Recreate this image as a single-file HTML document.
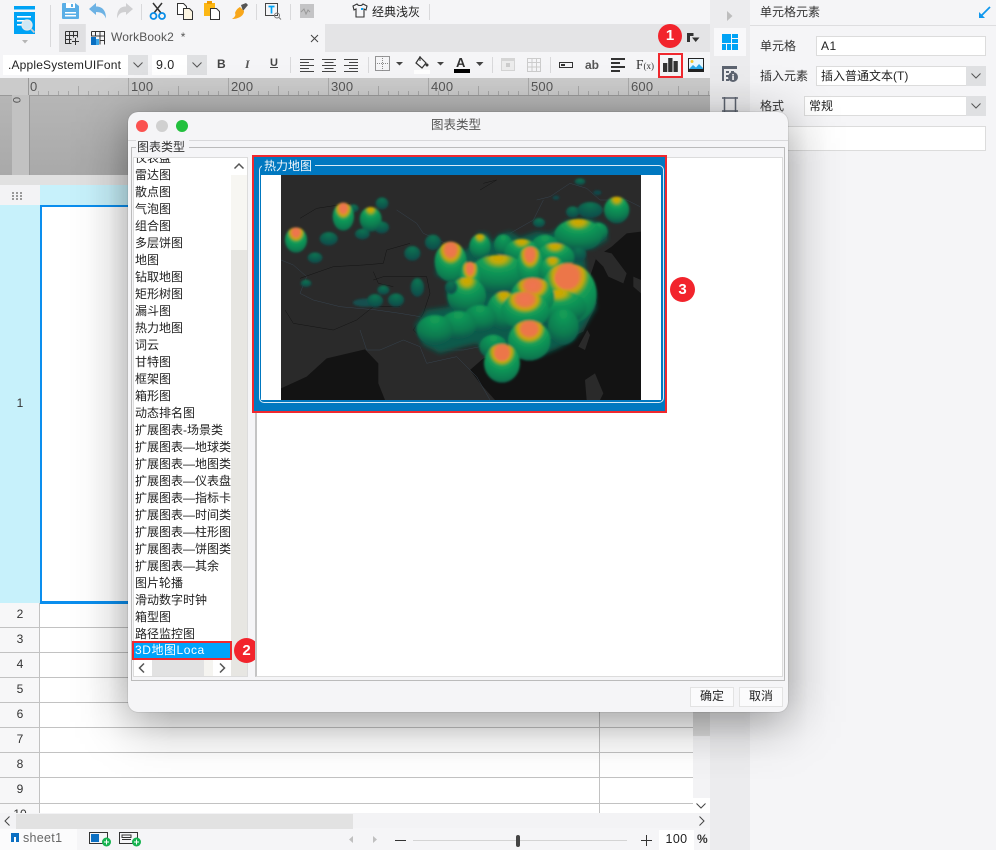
<!DOCTYPE html>
<html lang="zh"><head><meta charset="utf-8"><title>图表类型</title>
<style>
html,body{margin:0;padding:0;width:996px;height:850px;overflow:hidden;background:#f5f5f7}
body{position:relative;font:12px/17px "Liberation Sans","Noto Sans CJK SC",sans-serif;color:#333}
.a{position:absolute;box-sizing:border-box}
.t{position:absolute;white-space:nowrap}
svg{position:absolute;overflow:visible}
.sep{position:absolute;width:1px;background:#d9d9db}
.rn{position:absolute;top:79px;font-size:13px;line-height:15px;color:#555;letter-spacing:.2px}
.rowl{position:absolute;left:0;width:693px;height:1px;background:#c2c2c2}
.rh{position:absolute;left:0;width:40px;text-align:center;font-size:12px;color:#333}
.list div{height:17px;line-height:17px;padding-left:1px;white-space:nowrap;color:#222}
.inp{position:absolute;box-sizing:border-box;background:#fff;border:1px solid #dcdcdc;font-size:12px;line-height:18px;padding-left:4px;color:#222}
.dd{position:absolute;box-sizing:border-box;background:#dfe0e2}
.badge{position:absolute;width:24px;height:24px;border-radius:50%;background:#f2242c;color:#fff;font:bold 15px/24px "Liberation Sans",sans-serif;text-align:center}
.red{position:absolute;box-sizing:border-box;border:2px solid #f0282e}
.btn{position:absolute;box-sizing:border-box;background:#fbfbfc;border:1px solid #e3e3e3;text-align:center;line-height:17px;color:#222}
.shadow{position:absolute;left:68px;top:62px;width:780px;height:720px;
background:linear-gradient(90deg,rgba(0,0,0,0) 0,rgba(0,0,0,.015) 20px,rgba(0,0,0,.076) 40px,rgba(0,0,0,.21) 60px,rgba(0,0,0,.35) 82px,rgba(0,0,0,.42) 104px,rgba(0,0,0,.42) 676px,rgba(0,0,0,.35) 698px,rgba(0,0,0,.21) 720px,rgba(0,0,0,.076) 740px,rgba(0,0,0,.015) 760px,rgba(0,0,0,0) 780px);
-webkit-mask-image:linear-gradient(180deg,rgba(0,0,0,0) 0,rgba(0,0,0,.036) 20px,rgba(0,0,0,.18) 40px,rgba(0,0,0,.5) 60px,rgba(0,0,0,.84) 82px,#000 104px,#000 616px,rgba(0,0,0,.84) 638px,rgba(0,0,0,.5) 660px,rgba(0,0,0,.18) 680px,rgba(0,0,0,.036) 700px,rgba(0,0,0,0) 720px);
mask-image:linear-gradient(180deg,rgba(0,0,0,0) 0,rgba(0,0,0,.036) 20px,rgba(0,0,0,.18) 40px,rgba(0,0,0,.5) 60px,rgba(0,0,0,.84) 82px,#000 104px,#000 616px,rgba(0,0,0,.84) 638px,rgba(0,0,0,.5) 660px,rgba(0,0,0,.18) 680px,rgba(0,0,0,.036) 700px,rgba(0,0,0,0) 720px)}
</style></head><body>

<!-- top toolbar -->
<div class="a" style="left:0;top:0;width:710px;height:78px;background:#f5f5f7"></div>
<svg style="left:0;top:0" width="60" height="50" viewBox="0 0 60 50">
<rect x="14" y="6" width="21" height="3.5" fill="#00a3f5"/><rect x="14" y="12" width="21" height="22" fill="#00a3f5"/>
<rect x="17" y="16" width="14" height="1.6" fill="#fff"/><rect x="17" y="20" width="8" height="1.6" fill="#fff"/><rect x="17" y="24" width="8" height="1.6" fill="#fff"/>
<circle cx="27" cy="25" r="5" fill="#cfe8f5" stroke="#e8e8e8" stroke-width="1.3"/><path d="M31 29l3.5 3.5" stroke="#ccc" stroke-width="1.8"/>
<path d="M22 40h6l-3 3.5z" fill="#b5b5b5"/></svg>
<div class="sep" style="left:50px;top:5px;height:42px"></div>
<svg style="left:61px;top:2px" width="20" height="18" viewBox="0 0 20 18"><path d="M2 1h12l4 3v12a1 1 0 0 1-1 1H2a1 1 0 0 1-1-1V2a1 1 0 0 1 1-1z" fill="#5aaee6"/><rect x="5" y="1" width="9" height="5" fill="#fff"/><rect x="10" y="2" width="2" height="3" fill="#5aaee6"/><rect x="4" y="10" width="11" height="1.5" fill="#fff"/><rect x="4" y="13" width="11" height="1.5" fill="#fff"/></svg>
<svg style="left:89px;top:3px" width="18" height="16" viewBox="0 0 18 16"><path d="M0 6L7 0v3.500c6 0 10 3.500 10 12-2-5-5-6.500-10-6.500V12z" fill="#6cb2e4"/></svg>
<svg style="left:116px;top:3px" width="18" height="16" viewBox="0 0 18 16"><path d="M17 6L10 0v3.500c-6 0-9 3.500-9 12 2-5 4-6.500 9-6.500V12z" fill="#cfcfd1"/></svg>
<div class="sep" style="left:141px;top:4px;height:16px"></div>
<svg style="left:149px;top:2px" width="18" height="18" viewBox="0 0 18 18" fill="none"><path d="M4 1l8 10M13 1L5 11" stroke="#333" stroke-width="1.5"/><circle cx="4.500" cy="14" r="3" stroke="#0a8ee8" stroke-width="1.800"/><circle cx="13" cy="14" r="3" stroke="#0a8ee8" stroke-width="1.800"/></svg>
<svg style="left:177px;top:3px" width="17" height="17" viewBox="0 0 17 17"><path d="M.5.500h6l3 3v8h-9z" fill="#fff" stroke="#333"/><path d="M6.500 5.500h6l3 3v8h-9z" fill="#fdf6e3" stroke="#333"/></svg>
<svg style="left:204px;top:1px" width="17" height="19" viewBox="0 0 17 19"><rect x="0" y="2" width="11" height="13" fill="#fcb714"/><rect x="3" y="0" width="5" height="3" fill="#f09a00"/><path d="M6.500 7.500h6l3 3v8h-9z" fill="#fff" stroke="#333"/></svg>
<svg style="left:231px;top:3px" width="17" height="17" viewBox="0 0 17 17"><path d="M10 2l5-2 2 2-5 6z" fill="#555"/><path d="M9 4l4 4c0 5-6 8-12 8 3-2 4-4 3-6 1-3 3-5 5-6z" fill="#f8a71b"/></svg>
<div class="sep" style="left:256px;top:4px;height:16px"></div>
<svg style="left:265px;top:3px" width="16" height="17" viewBox="0 0 16 17" fill="none"><rect x=".5" y=".5" width="12" height="12" stroke="#444"/><path d="M3.500 3.500h6M6.500 3.500v7" stroke="#00a3f5" stroke-width="1.700"/><circle cx="12" cy="12.500" r="2.500" stroke="#777"/><path d="M14 14.500l2 2" stroke="#777"/></svg>
<div class="sep" style="left:290px;top:4px;height:16px"></div>
<svg style="left:300px;top:4px" width="15" height="15" viewBox="0 0 15 15"><rect width="14" height="14" fill="#c4c4c6"/><path d="M1 8l3-3 2 5 2-4 2 2" stroke="#999" fill="none"/></svg>
<svg style="left:352px;top:3px" width="16" height="15" viewBox="0 0 16 15" fill="none"><path d="M5 1L1 3l1 4 2-1v8h8V6l2 1 1-4-4-2c-1 2-5 2-6 0z" stroke="#333" stroke-width="1.100"/><rect x="9" y="5" width="2" height="2" fill="#00a3f5"/></svg>
<div class="t" style="left:372px;top:2px;font-size:12px;line-height:20px;color:#222">经典浅灰</div>
<div class="sep" style="left:429px;top:4px;height:16px"></div>

<!-- tabs row -->
<div class="a" style="left:59px;top:24px;width:651px;height:28px;background:#e4e4e6"></div>
<div class="a" style="left:59px;top:24px;width:26px;height:28px;background:#e0e0e2"></div>
<svg style="left:65px;top:31px" width="14" height="14" viewBox="0 0 14 14" fill="none" stroke="#333"><path d="M.5.500h12v6M.5.500v12h6M4.500.500v12M8.500.500v6M.5 4.500h12M.5 8.500h6"/><path d="M7 10.500h7M10.500 7v7"/></svg>
<div class="a" style="left:86px;top:24px;width:239px;height:28px;background:#f5f5f7"></div>
<svg style="left:91px;top:31px" width="14" height="14" viewBox="0 0 14 14" fill="none"><path d="M.5.500h13v13M.5.500v5M4.500.500v5M9 .5v13M.5 5h13M9 9.500h4.500" stroke="#333"/><rect x="0" y="6" width="5" height="8" fill="#0a6fc2"/><rect x="5" y="8" width="3" height="6" fill="#3aa6e8"/></svg>
<div class="t" style="left:111px;top:29px;font-size:12px;letter-spacing:.12px;color:#555">WorkBook2&nbsp; *</div>
<svg style="left:310px;top:34px" width="9" height="9" viewBox="0 0 9 9"><path d="M1 1l7 7M8 1L1 8" stroke="#444"/></svg>
<svg style="left:687px;top:33px" width="13" height="10" viewBox="0 0 13 10"><path d="M0 0h6.500v3H3v6H0z" fill="#333"/><path d="M5 4.500h7.500L8.700 9z" fill="#333"/></svg>

<!-- format toolbar -->
<div class="a" style="left:3px;top:55px;width:145px;height:20px;background:#fff"></div>
<div class="t" style="left:8px;top:56px;font-size:12px;line-height:19px;letter-spacing:.17px;color:#222">.AppleSystemUIFont</div>
<div class="dd" style="left:128px;top:55px;width:20px;height:20px"></div>
<svg style="left:133px;top:62px" width="10" height="6" viewBox="0 0 10 6" fill="none"><path d="M.5.500L5 5 9.500.5" stroke="#555"/></svg>
<div class="a" style="left:152px;top:55px;width:55px;height:20px;background:#fff"></div>
<div class="t" style="left:156px;top:56px;font-size:12.500px;line-height:19px;letter-spacing:.4px;color:#222">9.0</div>
<div class="dd" style="left:187px;top:55px;width:20px;height:20px"></div>
<svg style="left:192px;top:62px" width="10" height="6" viewBox="0 0 10 6" fill="none"><path d="M.5.500L5 5 9.500.5" stroke="#555"/></svg>
<div class="t" style="left:217px;top:56px;font:bold 12px/17px 'Liberation Sans',sans-serif;color:#444">B</div>
<div class="t" style="left:245px;top:56px;font:italic bold 12px/17px 'Liberation Serif',serif;color:#555">I</div>
<div class="t" style="left:270px;top:55px;font:bold 11px/17px 'Liberation Sans',sans-serif;color:#444;text-decoration:underline">U</div>
<div class="sep" style="left:290px;top:57px;height:16px"></div>
<svg style="left:300px;top:59px" width="60" height="13" viewBox="0 0 60 13" stroke="#444" fill="none"><path d="M0 .5h14M0 3.500h9M0 6.500h14M0 9.500h9M0 12.500h14"/><path d="M22 .5h14M24.500 3.500h9M22 6.500h14M24.500 9.500h9M22 12.500h14"/><path d="M44 .5h14M49 3.500h9M44 6.500h14M49 9.500h9M44 12.500h14"/></svg>
<div class="sep" style="left:368px;top:57px;height:16px"></div>
<svg style="left:375px;top:56px" width="30" height="16" viewBox="0 0 30 16" fill="none"><rect x=".5" y=".5" width="14" height="14" stroke="#333" stroke-dasharray="1 1"/><path d="M7.500 0v15M0 7.500h15" stroke="#888" stroke-dasharray="1 1"/><path d="M21 6h7l-3.500 3.500z" fill="#444"/></svg>
<svg style="left:414px;top:55px" width="32" height="19" viewBox="0 0 32 19" fill="none"><path d="M6 2l6 6-4 5-6-5z" stroke="#333" stroke-width="1.200"/><path d="M6 1v5" stroke="#333"/><circle cx="13" cy="10" r="1.500" fill="#333"/><rect y="15" width="16" height="4" fill="#fff"/><path d="M23 7h7l-3.500 3.500z" fill="#444"/></svg>
<div class="t" style="left:456px;top:55px;font:bold 13px/15px 'Liberation Sans',sans-serif;color:#333">A</div>
<div class="a" style="left:454px;top:69px;width:16px;height:4px;background:#000"></div>
<svg style="left:476px;top:62px" width="8" height="5"><path d="M0 0h7.500L3.700 4z" fill="#444"/></svg>
<div class="sep" style="left:492px;top:57px;height:16px"></div>
<svg style="left:501px;top:58px" width="14" height="13" viewBox="0 0 14 13"><rect width="14" height="13" fill="#d5d5d5"/><rect x="1" y="3" width="12" height="9" fill="#ececec"/><rect x="5" y="5" width="4" height="4" fill="#ccc"/></svg>
<svg style="left:527px;top:58px" width="14" height="14" viewBox="0 0 14 14" fill="none" stroke="#ccc"><path d="M.5.500h13v13H.5zM.5 4.500h13M.5 9h13M5 .5v13M9.500.5v13"/></svg>
<div class="sep" style="left:550px;top:57px;height:16px"></div>
<svg style="left:559px;top:62px" width="14" height="6" viewBox="0 0 14 6" fill="none"><rect x=".5" y=".5" width="13" height="5" stroke="#333"/><rect x="2" y="2" width="4" height="2" fill="#333"/></svg>
<div class="t" style="left:585px;top:57px;font:bold 12px/17px 'Liberation Sans',sans-serif;color:#555">ab</div>
<svg style="left:611px;top:58px" width="14" height="14" viewBox="0 0 14 14"><path d="M0 1h14M0 5h9M0 9h14M0 13h9" stroke="#333" stroke-width="2"/></svg>
<div class="t" style="left:636px;top:55px;font:13.500px/20px 'Liberation Serif',serif;color:#333">F<span style="font-size:9px">(x)</span></div>
<svg style="left:663px;top:57px" width="15" height="15" viewBox="0 0 15 15"><rect x="0" y="6" width="4.300" height="9" fill="#333"/><rect x="5.200" y="1" width="4.300" height="14" fill="#333"/><rect x="10.500" y="4" width="4.300" height="11" fill="#333"/></svg>
<svg style="left:688px;top:58px" width="16" height="14" viewBox="0 0 16 14"><rect width="16" height="14" fill="#222"/><rect x="1" y="1" width="14" height="10" fill="#e8f6fd"/><circle cx="4" cy="3.500" r="1.500" fill="#f5c52b"/><path d="M1 11l4-4 3 2.500 3-3.500 4 4v1z" fill="#2aa8e8"/></svg>
<div class="red" style="left:658px;top:53px;width:25px;height:25px"></div>
<div class="badge" style="left:658px;top:24px">1</div>

<!-- ruler + gray -->
<div class="a" style="left:0;top:78px;width:710px;height:17px;background:#cbcbcb"></div>
<div class="a" style="left:28px;top:91px;width:682px;height:4px;background:repeating-linear-gradient(90deg,#a8a8a8 0 1px,transparent 1px 10px)"></div>
<div class="a" style="left:28px;top:86px;width:682px;height:9px;background:repeating-linear-gradient(90deg,#a8a8a8 0 1px,transparent 1px 50px)"></div>
<div class="a" style="left:28px;top:78px;width:1px;height:17px;background:#999"></div>
<div class="a" style="left:128px;top:78px;width:1px;height:17px;background:#aaa"></div>
<div class="a" style="left:228px;top:78px;width:1px;height:17px;background:#aaa"></div>
<div class="a" style="left:328px;top:78px;width:1px;height:17px;background:#aaa"></div>
<div class="a" style="left:428px;top:78px;width:1px;height:17px;background:#aaa"></div>
<div class="a" style="left:528px;top:78px;width:1px;height:17px;background:#aaa"></div>
<div class="a" style="left:628px;top:78px;width:1px;height:17px;background:#aaa"></div>
<div class="rn" style="left:30px">0</div><div class="rn" style="left:131px">100</div><div class="rn" style="left:231px">200</div><div class="rn" style="left:331px">300</div><div class="rn" style="left:431px">400</div><div class="rn" style="left:531px">500</div><div class="rn" style="left:631px">600</div>
<div class="a" style="left:0;top:95px;width:710px;height:80px;background:linear-gradient(180deg,#b6b6b6,#a9a9a9)"></div>
<div class="a" style="left:0;top:95px;width:710px;height:1px;background:#999"></div>
<div class="a" style="left:12px;top:95px;width:17px;height:80px;background:#c2c2c2"></div>
<div class="a" style="left:29px;top:95px;width:1px;height:80px;background:#999"></div>
<div class="t" style="left:13px;top:94px;font-size:11px;line-height:12px;color:#555;transform:rotate(90deg)">0</div>

<!-- sheet -->
<div class="a" style="left:0;top:175px;width:710px;height:10px;background:#e1e1e1"></div>
<div class="a" style="left:0;top:185px;width:40px;height:20px;background:#f3f3f5"></div>
<svg style="left:12px;top:192px" width="10" height="8"><path d="M0 1h10M0 4h10M0 7h10" stroke="#999" stroke-width="2" stroke-dasharray="2 2"/></svg>
<div class="a" style="left:40px;top:185px;width:653px;height:20px;background:#c7f1fb"></div>
<div class="a" style="left:0;top:205px;width:40px;height:398px;background:#c7f1fb"></div>
<div class="a" style="left:40px;top:205px;width:653px;height:608px;background:#fff"></div>
<div class="a" style="left:40px;top:205px;width:560px;height:398px;border:2px solid #0a8eee;border-right:0"></div>
<div class="a" style="left:0;top:603px;width:40px;height:210px;background:#f7f7f8"></div>
<div class="a" style="left:39px;top:603px;width:1px;height:210px;background:#c2c2c2"></div>
<div class="a" style="left:599px;top:603px;width:1px;height:210px;background:#c2c2c2"></div>
<div class="a" style="left:40px;top:602px;width:560px;height:2px;background:#0a8eee"></div>
<div class="rowl" style="top:627px"></div><div class="rowl" style="top:652px"></div><div class="rowl" style="top:677px"></div><div class="rowl" style="top:702px"></div><div class="rowl" style="top:727px"></div><div class="rowl" style="top:752px"></div><div class="rowl" style="top:777px"></div><div class="rowl" style="top:803px"></div>
<div class="rh" style="top:395px">1</div><div class="rh" style="top:606px">2</div><div class="rh" style="top:631px">3</div><div class="rh" style="top:656px">4</div><div class="rh" style="top:681px">5</div><div class="rh" style="top:706px">6</div><div class="rh" style="top:731px">7</div><div class="rh" style="top:756px">8</div><div class="rh" style="top:781px">9</div><div class="rh" style="top:806px;height:7px;overflow:hidden;line-height:17px">10</div>
<!-- v scroll -->
<div class="a" style="left:693px;top:185px;width:17px;height:628px;background:#f3f3f5"></div>
<div class="a" style="left:693px;top:700px;width:17px;height:36px;background:#dcdcdc"></div>
<div class="a" style="left:693px;top:798px;width:17px;height:15px;background:#fff"></div>
<svg style="left:696px;top:803px" width="10" height="6" fill="none"><path d="M.5.500L5 5 9.500.5" stroke="#444"/></svg>
<!-- h scroll -->
<div class="a" style="left:0;top:813px;width:710px;height:15px;background:#f3f3f5"></div>
<div class="a" style="left:16px;top:814px;width:337px;height:15px;background:#e2e2e2"></div>
<svg style="left:4px;top:816px" width="6" height="10" fill="none"><path d="M5.500.5L1 5l4.500 4.500" stroke="#444"/></svg>
<svg style="left:699px;top:816px" width="6" height="10" fill="none"><path d="M.5.500L5 5 .5 9.500" stroke="#444"/></svg>
<!-- bottom bar -->
<div class="a" style="left:0;top:829px;width:710px;height:21px;background:#f5f5f7"></div>
<div class="a" style="left:0;top:829px;width:77px;height:21px;background:#fbfbfc"></div>
<svg style="left:11px;top:833px" width="8" height="9" viewBox="0 0 8 9"><rect width="8" height="9" fill="#0b6fc2"/><rect x="3" y="4" width="2" height="5" fill="#fff"/></svg>
<div class="t" style="left:23px;top:830px;font:12.500px/17px 'Liberation Sans',sans-serif;letter-spacing:.3px;color:#666">sheet1</div>
<svg style="left:89px;top:832px" width="23" height="16" viewBox="0 0 23 16" fill="none"><rect x=".5" y=".5" width="18" height="11" stroke="#333"/><rect x="2" y="2" width="8" height="8" fill="#0b6fc2"/><circle cx="17.500" cy="10" r="4.500" fill="#16b34f"/><path d="M15 10h5M17.500 7.500v5" stroke="#fff"/></svg>
<svg style="left:119px;top:832px" width="23" height="16" viewBox="0 0 23 16" fill="none"><rect x=".5" y=".5" width="18" height="11" stroke="#333"/><path d="M3 3h9v2.500H3zM3 7.500h9" stroke="#333"/><circle cx="17.500" cy="10" r="4.500" fill="#16b34f"/><path d="M15 10h5M17.500 7.500v5" stroke="#fff"/></svg>
<svg style="left:348px;top:836px" width="30" height="8"><path d="M5 0v7L1 3.500zM25 0v7l4-3.500z" fill="#c0c0c0"/></svg>
<div class="a" style="left:395px;top:840px;width:11px;height:1px;background:#333"></div>
<div class="a" style="left:413px;top:840px;width:214px;height:1px;background:#d4d4d4"></div>
<div class="a" style="left:516px;top:835px;width:4px;height:12px;background:#444;border-radius:2px"></div>
<svg style="left:641px;top:835px" width="11" height="11"><path d="M0 5.500h11M5.500 0v11" stroke="#333"/></svg>
<div class="a" style="left:659px;top:830px;width:35px;height:20px;background:#fff;text-align:center;line-height:19px;font-size:12.500px;letter-spacing:.4px;color:#222">100</div>
<div class="t" style="left:697px;top:831px;font-size:12px;color:#333;font-weight:bold">%</div>

<!-- side panel -->
<div class="a" style="left:710px;top:0;width:40px;height:850px;background:#ececee"></div>
<svg style="left:727px;top:11px" width="6" height="10"><path d="M0 0l5.500 5L0 10z" fill="#bdbdbd"/></svg>
<div class="a" style="left:714px;top:28px;width:32px;height:28px;background:#f8f8fa"></div>
<svg style="left:722px;top:34px" width="16" height="16" viewBox="0 0 16 16"><g fill="#00a3f5"><rect width="9" height="9"/><rect x="10" width="6" height="4"/><rect x="10" y="5" width="6" height="4"/><rect y="10" width="4" height="6"/><rect x="5" y="10" width="4" height="6"/><rect x="10" y="10" width="6" height="6"/></g></svg>
<svg style="left:722px;top:66px" width="16" height="16" viewBox="0 0 16 16"><path d="M0 0h15v3H0zM0 3h2v12H0zM4 5h3v2H4zM9 5h3v2H9zM4 9h3v2H4zM4 13h3v2H4z" fill="#5d6470"/><circle cx="11" cy="11" r="5" fill="#5d6470"/><rect x="10.300" y="10" width="1.500" height="4" fill="#fff"/><rect x="10.300" y="8" width="1.500" height="1.500" fill="#fff"/></svg>
<svg style="left:722px;top:97px" width="16" height="15" viewBox="0 0 16 15" fill="none" stroke="#5d6470" stroke-width="1.500"><path d="M0 1h16M0 14h16M2.500 0v15M13.500 0v15"/></svg>
<div class="a" style="left:750px;top:25px;width:246px;height:1px;background:#dedee0"></div>
<div class="t" style="left:760px;top:4px;font-size:12px;color:#333">单元格元素</div>
<svg style="left:979px;top:6px" width="12" height="12" viewBox="0 0 12 12" fill="none"><path d="M11 1L2 10" stroke="#1098ee" stroke-width="1.800"/><path d="M0 6v6h6z" fill="#1098ee"/></svg>
<div class="t" style="left:760px;top:38px;color:#333">单元格</div>
<div class="inp" style="left:816px;top:36px;width:170px;height:20px;letter-spacing:.5px">A1</div>
<div class="t" style="left:760px;top:68px;color:#333">插入元素</div>
<div class="inp" style="left:816px;top:66px;width:170px;height:20px">插入普通文本(T)</div>
<div class="dd" style="left:966px;top:66px;width:20px;height:20px"></div>
<svg style="left:971px;top:73px" width="10" height="6" fill="none"><path d="M.5.500L5 5 9.500.5" stroke="#555"/></svg>
<div class="t" style="left:760px;top:98px;color:#333">格式</div>
<div class="inp" style="left:804px;top:96px;width:182px;height:20px">常规</div>
<div class="dd" style="left:966px;top:96px;width:20px;height:20px"></div>
<svg style="left:971px;top:103px" width="10" height="6" fill="none"><path d="M.5.500L5 5 9.500.5" stroke="#555"/></svg>
<div class="inp" style="left:780px;top:126px;width:206px;height:25px"></div>

<!-- dialog shadow -->
<div class="shadow"></div>

<!-- dialog -->
<div class="a" style="left:128px;top:112px;width:660px;height:600px;background:#f5f5f7;border-radius:10px;box-shadow:0 0 1px rgba(0,0,0,.4)"></div>
<div class="a" style="left:128px;top:140px;width:660px;height:1px;background:#d8d8da"></div>
<div class="a" style="left:136px;top:120px;width:12px;height:12px;border-radius:50%;background:#fb5250"></div>
<div class="a" style="left:156px;top:120px;width:12px;height:12px;border-radius:50%;background:#d0d0d0"></div>
<div class="a" style="left:176px;top:120px;width:12px;height:12px;border-radius:50%;background:#23c03e"></div>
<div class="t" style="left:431px;top:117px;font-size:12.500px;color:#555">图表类型</div>

<div class="a" style="left:131px;top:147px;width:654px;height:534px;border:1px solid #bbb"></div>
<div class="a" style="left:136px;top:140px;width:53px;height:14px;background:#f5f5f7"></div>
<div class="t" style="left:137px;top:139px;color:#333">图表类型</div>

<!-- list -->
<div class="a" style="left:133px;top:157px;width:115px;height:520px;background:#fff;border:1px solid #dcdcdc"></div>
<div class="a list" style="left:134px;top:150px;width:97px;height:510px;overflow:hidden;clip-path:inset(8px 0 0 0)">
<div>仪表盘</div><div>雷达图</div><div>散点图</div><div>气泡图</div><div>组合图</div><div>多层饼图</div><div>地图</div><div>钻取地图</div><div>矩形树图</div><div>漏斗图</div><div>热力地图</div><div>词云</div><div>甘特图</div><div>框架图</div><div>箱形图</div><div>动态排名图</div><div>扩展图表-场景类</div><div>扩展图表—地球类</div><div>扩展图表—地图类</div><div>扩展图表—仪表盘</div><div>扩展图表—指标卡</div><div>扩展图表—时间类</div><div>扩展图表—柱形图</div><div>扩展图表—饼图类</div><div>扩展图表—其余</div><div>图片轮播</div><div>滑动数字时钟</div><div>箱型图</div><div>路径监控图</div>
</div>
<div class="a" style="left:231px;top:158px;width:16px;height:518px;background:#e7e6e2"></div>
<div class="a" style="left:231px;top:158px;width:16px;height:92px;background:#f7f6f2"></div>
<div class="a" style="left:231px;top:158px;width:16px;height:17px;background:#fff"></div>
<svg style="left:234px;top:163px" width="10" height="6" fill="none"><path d="M.5 5.500L5 1l4.500 4.500" stroke="#555" stroke-width="1.500"/></svg>
<div class="a" style="left:134px;top:642px;width:97px;height:16px;background:#00a4fb;color:#fff;padding-left:1px;line-height:17px;letter-spacing:.55px;white-space:nowrap">3D地图Loca</div>
<div class="red" style="left:132px;top:641px;width:100px;height:19px"></div>
<div class="badge" style="left:234px;top:638px;width:25px;height:25px;line-height:25px">2</div>
<div class="a" style="left:134px;top:660px;width:97px;height:16px;background:#e2e2e2"></div>
<div class="a" style="left:134px;top:660px;width:18px;height:16px;background:#fff"></div>
<div class="a" style="left:204px;top:660px;width:9px;height:16px;background:#f5f4f0"></div>
<div class="a" style="left:213px;top:660px;width:18px;height:16px;background:#fff"></div>
<svg style="left:138px;top:663px" width="7" height="10" fill="none"><path d="M6 .5L1.500 5 6 9.500" stroke="#555" stroke-width="1.500"/></svg>
<svg style="left:219px;top:663px" width="7" height="10" fill="none"><path d="M1 .5L5.500 5 1 9.500" stroke="#555" stroke-width="1.500"/></svg>

<!-- right preview -->
<div class="a" style="left:255px;top:157px;width:528px;height:520px;background:#fff;border:1px solid #dcdcdc;border-left:2px solid #c4c4c4"></div>
<div class="a" style="left:254px;top:157px;width:411px;height:254px;background:#0078c0"></div>
<div class="a" style="left:259px;top:165px;width:405px;height:238px;border:1px solid #d8eaf6;border-radius:5px"></div>
<div class="a" style="left:262px;top:158px;width:53px;height:14px;background:#0078c0"></div>
<div class="t" style="left:264px;top:158px;color:#f1f6fa">热力地图</div>
<div class="a" style="left:261px;top:175px;width:400px;height:225px;background:#fff"></div>
<svg style="left:250px;top:150px" width="430" height="270" viewBox="0 0 1290 810">
<defs>
<clipPath id="c"><rect x="93" y="75" width="1080" height="675"/></clipPath>
<filter id="o" x="-20%" y="-20%" width="140%" height="140%"><feGaussianBlur stdDeviation="7"/></filter>
<filter id="s" x="-30%" y="-30%" width="160%" height="160%"><feGaussianBlur stdDeviation="3"/></filter>
<radialGradient id="H" cx=".5" cy=".2" r=".9"><stop offset="0" stop-color="#ef7452"/><stop offset=".19" stop-color="#ea7848"/><stop offset=".3" stop-color="#c8a808"/><stop offset=".42" stop-color="#14a058"/><stop offset=".78" stop-color="#0a7c50"/><stop offset="1" stop-color="#0b4f4a"/></radialGradient>
<radialGradient id="Y" cx=".5" cy=".08" r=".95"><stop offset="0" stop-color="#d4a600"/><stop offset=".14" stop-color="#bcaa0a"/><stop offset=".3" stop-color="#14a058"/><stop offset=".7" stop-color="#0a7c50"/><stop offset="1" stop-color="#0b4f4a"/></radialGradient>
<radialGradient id="G" cx=".5" cy=".15" r=".9"><stop offset="0" stop-color="#14a058"/><stop offset=".6" stop-color="#0a7c50"/><stop offset="1" stop-color="#0b4f4a"/></radialGradient>
<radialGradient id="D" cx=".5" cy=".2" r=".85"><stop offset="0" stop-color="#0c7452"/><stop offset="1" stop-color="#12474a"/></radialGradient>
</defs>
<g clip-path="url(#c)">
<rect x="93" y="75" width="1080" height="675" fill="#2a2a2a"/>
<path d="M93 715L170 680 230 625 345 598 385 640 385 700 405 750H93zM660 660L700 625 790 610 900 590 1000 545 1040 460 1020 380 1040 320 1085 290 1130 250 1173 245V750H735L690 700z" fill="#131313"/>
<path d="M1040 300L1085 310 1130 370 1120 400 1075 380 1060 350 1030 320zM985 590L1012 540 1020 555 1005 600zM1005 690L1035 670 1060 730 1050 750H1010zM1150 380L1173 390V430L1150 410z" fill="#2a2a2a"/>
<g fill="none" stroke="#36434f" stroke-width="1.500">
<path d="M93 330L130 345 170 380 150 430 190 450 270 470 380 480 450 490 510 500 530 560 560 600 640 600 690 590"/>
<path d="M860 150L900 140 960 100 1010 115 1050 150 1130 150 1170 170M780 250L850 210 880 150M440 180L500 220 520 250 610 290"/>
<path d="M330 540L350 600 390 600 460 570 510 590 530 640 620 620 680 680 720 750"/>
</g>
<g fill="none" stroke="#141414" stroke-width="1.500">
<path d="M150 205L200 175 300 160M150 385L250 350 340 345 400 340 410 300 480 280M370 390L400 380 530 380 540 430 520 490 490 540 520 570M105 480L130 520 250 540 320 510 370 470 450 470M370 365L385 400 430 410M700 100L740 90 690 120"/>
</g>
<!-- base mass -->
<path filter="url(#o)" fill="#0a5a4c" d="M558 375L562 320 590 282 640 305 668 285 685 248 712 250 730 280 745 255 780 245 810 262 860 245 900 250 925 235 950 212 1015 203 1070 230 1072 270 1030 295 990 298 1005 330 1010 380 1035 430 1038 475 1000 535 970 570 925 595 870 618 790 610 710 610 680 580 640 590 570 610 520 585 495 525 530 480 600 470 590 430 610 395z"/>
<!-- domes, back to front -->
<g filter="url(#s)">
<ellipse cx="1045" cy="245" rx="28" ry="27" fill="url(#G)"/>
<ellipse cx="985" cy="255" rx="72" ry="48" fill="url(#Y)"/>
<ellipse cx="985" cy="312" rx="24" ry="22" fill="url(#D)"/>
<ellipse cx="760" cy="285" rx="28" ry="32" fill="url(#G)"/>
<ellipse cx="885" cy="290" rx="42" ry="36" fill="url(#G)"/>
<ellipse cx="690" cy="290" rx="32" ry="38" fill="url(#Y)"/>
<ellipse cx="602" cy="335" rx="48" ry="60" fill="url(#H)"/>
<ellipse cx="815" cy="307" rx="52" ry="40" fill="url(#Y)"/>
<ellipse cx="915" cy="322" rx="58" ry="42" fill="url(#Y)"/>
<ellipse cx="745" cy="372" rx="88" ry="57" fill="url(#Y)"/>
<ellipse cx="840" cy="348" rx="40" ry="58" fill="url(#H)"/>
<ellipse cx="660" cy="385" rx="30" ry="50" fill="url(#H)"/>
<ellipse cx="908" cy="368" rx="42" ry="46" fill="url(#Y)"/>
<ellipse cx="955" cy="432" rx="85" ry="92" fill="url(#H)"/>
<ellipse cx="925" cy="472" rx="85" ry="52" fill="url(#Y)"/>
<ellipse cx="848" cy="440" rx="66" ry="56" fill="url(#H)"/>
<ellipse cx="650" cy="438" rx="58" ry="55" fill="url(#Y)"/>
<ellipse cx="762" cy="482" rx="52" ry="57" fill="url(#Y)"/>
<ellipse cx="825" cy="482" rx="72" ry="57" fill="url(#H)"/>
<ellipse cx="690" cy="505" rx="50" ry="40" fill="url(#G)"/>
<ellipse cx="625" cy="525" rx="55" ry="42" fill="url(#G)"/>
<ellipse cx="555" cy="540" rx="55" ry="45" fill="url(#G)"/>
<ellipse cx="940" cy="530" rx="46" ry="54" fill="url(#G)"/>
<ellipse cx="838" cy="572" rx="64" ry="60" fill="url(#H)"/>
<ellipse cx="730" cy="590" rx="42" ry="36" fill="url(#G)"/>
<ellipse cx="756" cy="640" rx="54" ry="58" fill="url(#H)"/>
<ellipse cx="950" cy="385" rx="36" ry="32" fill="#ec7648"/>
<ellipse cx="756" cy="612" rx="22" ry="20" fill="#ec7648"/>
<ellipse cx="838" cy="540" rx="25" ry="16" fill="#ec7648"/>
</g>
<!-- isolated domes -->
<g filter="url(#s)">
<ellipse cx="395" cy="232" rx="22" ry="18" fill="url(#D)"/>
<ellipse cx="396" cy="160" rx="19" ry="18" fill="url(#D)"/>
<ellipse cx="310" cy="175" rx="16" ry="12" fill="url(#D)"/>
<ellipse cx="280" cy="200" rx="32" ry="42" fill="url(#H)"/>
<ellipse cx="362" cy="208" rx="33" ry="37" fill="url(#Y)"/>
<ellipse cx="138" cy="270" rx="33" ry="38" fill="url(#H)"/>
<ellipse cx="236" cy="266" rx="27" ry="20" fill="url(#D)"/>
<ellipse cx="337" cy="252" rx="22" ry="16" fill="url(#D)"/>
<ellipse cx="195" cy="323" rx="22" ry="16" fill="url(#D)"/>
<ellipse cx="487" cy="310" rx="24" ry="22" fill="url(#D)"/>
<ellipse cx="549" cy="277" rx="24" ry="23" fill="url(#D)"/>
<ellipse cx="168" cy="400" rx="16" ry="11" fill="url(#D)"/>
<ellipse cx="345" cy="458" rx="36" ry="12" fill="#13504f"/>
<ellipse cx="375" cy="452" rx="24" ry="20" fill="url(#D)"/>
<ellipse cx="400" cy="420" rx="18" ry="14" fill="url(#D)"/>
<ellipse cx="438" cy="450" rx="24" ry="20" fill="url(#D)"/>
<ellipse cx="502" cy="412" rx="20" ry="28" fill="url(#D)"/>
<ellipse cx="603" cy="412" rx="18" ry="20" fill="url(#D)"/>
<ellipse cx="867" cy="218" rx="18" ry="14" fill="url(#D)"/>
<ellipse cx="968" cy="186" rx="20" ry="17" fill="url(#D)"/>
<ellipse cx="1020" cy="180" rx="38" ry="24" fill="url(#D)"/>
<ellipse cx="1100" cy="180" rx="38" ry="40" fill="url(#Y)"/>
<ellipse cx="990" cy="95" rx="16" ry="10" fill="url(#D)"/>
<ellipse cx="1042" cy="128" rx="12" ry="7" fill="#0f4a4c"/>
<ellipse cx="918" cy="143" rx="10" ry="6" fill="#0f4a4c"/>
</g>
</g>
</svg>
<div class="red" style="left:252px;top:155px;width:415px;height:258px"></div>
<div class="badge" style="left:670px;top:277px;width:25px;height:25px;line-height:25px">3</div>

<div class="btn" style="left:690px;top:687px;width:44px;height:20px">确定</div>
<div class="btn" style="left:739px;top:687px;width:44px;height:20px">取消</div>
</body></html>
